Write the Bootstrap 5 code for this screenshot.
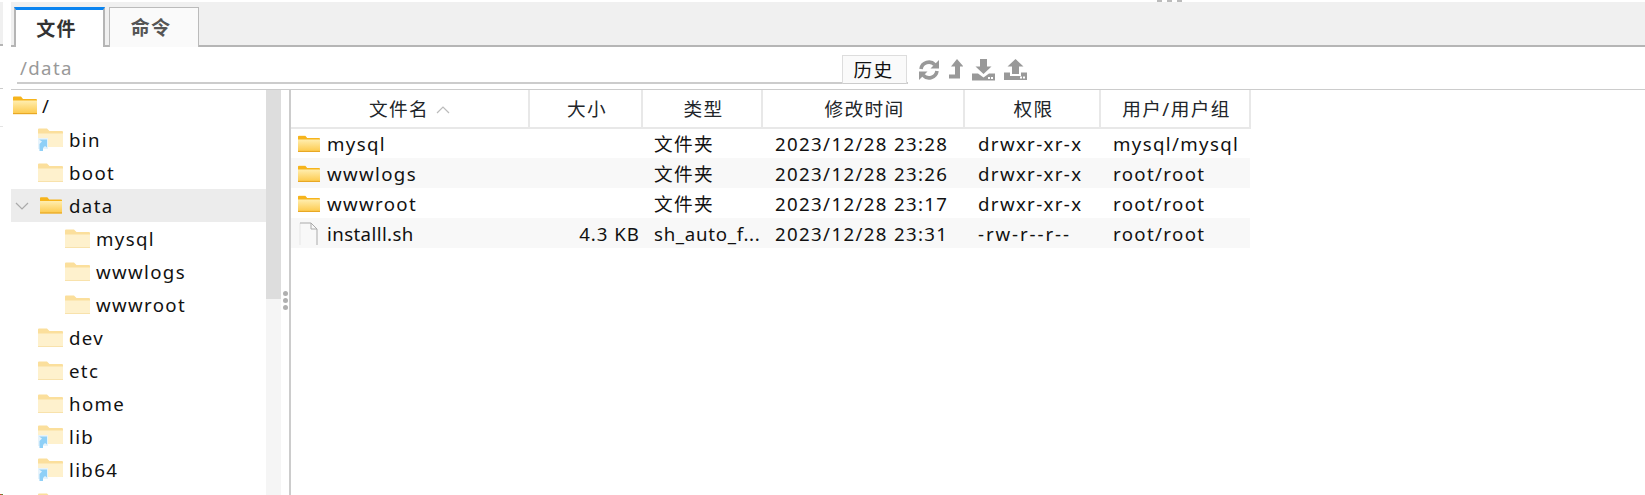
<!DOCTYPE html>
<html lang="zh-CN">
<head>
  <meta charset="UTF-8" />
  <meta name="viewport" content="width=device-width, initial-scale=1" />
  <title>文件</title>
  <link href="https://cdn.jsdelivr.net/npm/bootstrap@5.3.3/dist/css/bootstrap.min.css" rel="stylesheet" />
  <style>
    html, body { height: 495px; overflow: hidden; }
    body {
      background: #fff;
      color: #111;
      font-family: "Noto Sans", "Noto Sans CJK SC", sans-serif;
      font-size: 18.67px;
      letter-spacing: 1.35px;
      line-height: 24px;
    }
    .page-wrap { height: 495px; padding-top: 2px; position: relative; }
    .edge-strip { width: 3px; flex: none; margin-right: 8px; }
    .edge-top { height: 44px; background: #f0f0f0; border-bottom: 2px solid #b5b5b5; }
    .edge-line { height: 1px; background: #ccc; margin-top: 42px; }
    .edge-line2 { height: 1px; background: #e4e4e4; margin-top: 37px; }
    .main-col { min-width: 0; }

    .tab-bar { height: 45px; background: #f0f0f0; border-bottom: 2px solid #b5b5b5; padding: 5px 0 0 3px; gap: 4px; }
    .tab-bar .nav-link {
      width: 90px; height: 40px; padding: 0 6px 0 0; border-radius: 0; background: #fafafa;
      border: 1px solid #bbb; border-bottom: 0; color: #555; font-weight: 700; font-size: 19px;
      display: flex; align-items: center; justify-content: center;
    }
    .tab-bar .nav-link.active {
      width: 91px; height: 40px; background: #fff; color: #333;
      border-top: 3px solid #0a84f0; border-left: 2px solid #b5b5b5; border-right: 2px solid #b5b5b5;
    }

    .path-bar { height: 43px; border-bottom: 1px solid #ccc; background: #fff; padding-left: 6px; }
    .path-field {
      width: 891px; height: 37px; border-bottom: 2px solid #ccc; color: #999; padding-left: 3px; line-height: 42px;
    }
    .hist-btn {
      position: relative; width: 65px; height: 29px; margin: 8px 0 0 -66px; align-self: flex-start;
      padding: 0 2px 0 0; border: 1px solid #ddd; border-bottom: 1px solid #ccc; border-radius: 0; background: #fafafa;
      color: #111; font-size: 18.67px; line-height: 27px; letter-spacing: 1.35px;
    }
    .tool-icons { margin-left: 11px; margin-top: 12px; align-self: flex-start; gap: 9px; color: #999; }
    .tool-icons svg { display: block; }

    .split { height: 405px; }
    .tree-pane { width: 255px; flex: none; overflow: hidden; padding-top: 1px; }
    .tree-row { height: 33px; align-items: center; white-space: nowrap; }
    .tree-row.picked { background: #ececec; }
    .tree-root { padding: 0 0 3px 2px; gap: 5px; height: 32px; }
    .tree-l1 { padding-left: 27px; gap: 6px; }
    .tree-l1.open { padding-left: 29px; gap: 7px; position: relative; }
    .tree-l2 { padding-left: 54px; gap: 6px; }
    .tree-chev { position: absolute; left: 4px; top: 13px; }

    .scroll-track { width: 15px; flex: none; background: #f5f5f5; }
    .scroll-thumb { height: 209px; background: #ddd; }
    .split-grip { width: 8px; flex: none; gap: 2px; padding-top: 201px; }
    .grip-dot { width: 5px; height: 5px; border-radius: 50%; background: #b0b0b0; }

    .file-pane { border-left: 2px solid #ccc; min-width: 0; }
    .file-table { width: 959px; table-layout: fixed; margin: 0; border-collapse: collapse; }
    .file-table th, .file-table td { padding: 1px 0 0 12px; border: 0; font-weight: 400; white-space: nowrap; overflow: hidden; box-shadow: none; }
    .file-table thead th {
      height: 38px; text-align: center; padding: 1px 0 0 3px; border-right: 2px solid #e8e8e8; border-bottom: 2px solid #e8e8e8; vertical-align: middle;
    }
    .file-table thead th:first-child { padding-left: 0; }
    .file-table td { height: 30px; vertical-align: middle; background: transparent; color: #111; }
    .file-table tbody tr:nth-child(even) td { background: #f8f8f8; }
    .file-table td.name-cell { padding-left: 7px; }
    .file-table td.size-cell { padding: 1px 2px 0 0; text-align: right; letter-spacing: 1px; }
    .file-table td.date-cell { padding-left: 13px; }
    .file-table td.perm-cell { padding-left: 14px; }
    .file-table td.owner-cell { padding-left: 13px; }
    .name-inner { gap: 7px; }
    .tight-name { letter-spacing: .4px; }
    .tight-type { letter-spacing: .7px; }
    .wide-perm { letter-spacing: 1.9px; }
    .sort-caret { margin-left: 7px; vertical-align: 2px; }

    .top-dots { position: absolute; left: 1157px; top: 0; gap: 5px; }
    .top-dots span { width: 5px; height: 2px; background: #bbb; }
    .corner-px { position: absolute; left: 0; bottom: 0; width: 3px; height: 1px; background: linear-gradient(90deg, #e33, #3a3); }
  </style>
</head>
<body>
  <svg width="0" height="0" class="position-absolute">
    <defs>
      <linearGradient id="folderFill" x1="0" y1="0" x2="0" y2="1">
        <stop offset="0" stop-color="#ffeeb0" />
        <stop offset="1" stop-color="#fdc94a" />
      </linearGradient>
      <symbol id="folderBright" viewBox="0 0 24 19">
        <path d="M0 1.500a1 1 0 0 1 1-1h7l2 2.500H23a1 1 0 0 1 1 1V17a1 1 0 0 1-1 1H1a1 1 0 0 1-1-1z" fill="#f6b41c" />
        <path d="M0 4.500h24V17a1 1 0 0 1-1 1H1a1 1 0 0 1-1-1z" fill="url(#folderFill)" />
        <rect x="0" y="17" width="24" height="1.200" fill="#e8a825" />
      </symbol>
      <symbol id="folderPale" viewBox="0 0 25 20">
        <path d="M0 1.500a1 1 0 0 1 1-1h8l2.500 2.500H24a1 1 0 0 1 1 1V18a1 1 0 0 1-1 1H1a1 1 0 0 1-1-1z" fill="#fbdf9c" />
        <path d="M0 5.500h25V18a1 1 0 0 1-1 1H1a1 1 0 0 1-1-1z" fill="#fef1cd" />
        <rect x="0" y="18" width="25" height="1" fill="#f8e2ac" />
      </symbol>
      <symbol id="folderLink" viewBox="0 0 25 24">
        <path d="M0 1.500a1 1 0 0 1 1-1h8l2.500 2.500H24a1 1 0 0 1 1 1V18a1 1 0 0 1-1 1H1a1 1 0 0 1-1-1z" fill="#fbdf9c" />
        <path d="M0 5.500h25V18a1 1 0 0 1-1 1H1a1 1 0 0 1-1-1z" fill="#fef1cd" />
        <rect x="0" y="10" width="10" height="11" fill="#e6f3fb" />
        <path d="M1 11.500h8v8l-2-1.500-2 2v3H1.500v-7l2.500-2.500z" fill="#8fd0f7" />
      </symbol>
    </defs>
  </svg>

  <div class="page-wrap d-flex">
    <div class="edge-strip">
      <div class="edge-top"></div>
      <div class="edge-line"></div>
      <div class="edge-line2"></div>
    </div>

    <div class="main-col flex-grow-1 d-flex flex-column">
      <ul class="nav tab-bar">
        <li class="nav-item"><a class="nav-link active" href="#">文件</a></li>
        <li class="nav-item"><a class="nav-link" href="#">命令</a></li>
      </ul>

      <div class="path-bar d-flex">
        <div class="path-field">/data</div>
        <button class="btn hist-btn" type="button">历史</button>
        <div class="tool-icons d-flex">
          <svg width="22" height="22" viewBox="0 0 22 22" fill="none">
            <path d="M3 10A8 8 0 0 1 16.800 5.800" stroke="#999" stroke-width="3.600" />
            <path d="M21 1v8.500h-8.500z" fill="#999" />
            <path d="M19 12A8 8 0 0 1 5.200 16.200" stroke="#999" stroke-width="3.600" />
            <path d="M1 21v-8.500h8.500z" fill="#999" />
          </svg>
          <svg width="14" height="20" viewBox="0 0 14 20">
            <path d="M8 0l6.500 7.500H11V19.500H0v-4h6V7.500H2z" fill="#999" />
          </svg>
          <svg width="23" height="22" viewBox="0 0 23 22">
            <path d="M8 0h7v7.500h4.500L11.500 15 3.500 7.500H8z" fill="#999" />
            <path d="M0 14.500h6l5.500 4 5.500-4h6V21.500H0z" fill="#999" />
            <rect x="16" y="18" width="2" height="2" fill="#fff" />
            <rect x="19" y="18" width="2" height="2" fill="#fff" />
          </svg>
          <svg width="23" height="22" viewBox="0 0 23 22">
            <path d="M11.500 0l8 7.500H15V15H8V7.500H3.500z" fill="#999" />
            <path d="M0 13.500h6v3.500h11v-3.500h6V21H0z" fill="#999" />
            <rect x="16" y="17.500" width="2" height="2" fill="#fff" />
            <rect x="19" y="17.500" width="2" height="2" fill="#fff" />
          </svg>
        </div>
      </div>

      <div class="split d-flex">
        <div class="tree-pane">
          <div class="tree-row tree-root d-flex"><svg width="24" height="19"><use href="#folderBright" /></svg><span>/</span></div>
          <div class="tree-row tree-l1 d-flex"><svg width="25" height="24"><use href="#folderLink" /></svg><span>bin</span></div>
          <div class="tree-row tree-l1 d-flex"><svg width="25" height="20"><use href="#folderPale" /></svg><span>boot</span></div>
          <div class="tree-row tree-l1 open picked d-flex">
            <svg class="tree-chev" width="14" height="8" viewBox="0 0 14 8" fill="none"><path d="M1 1l6 6 6-6" stroke="#aaa" stroke-width="1.200" /></svg>
            <svg width="22" height="19" viewBox="0 0 24 19"><use href="#folderBright" /></svg><span>data</span>
          </div>
          <div class="tree-row tree-l2 d-flex"><svg width="25" height="20"><use href="#folderPale" /></svg><span>mysql</span></div>
          <div class="tree-row tree-l2 d-flex"><svg width="25" height="20"><use href="#folderPale" /></svg><span>wwwlogs</span></div>
          <div class="tree-row tree-l2 d-flex"><svg width="25" height="20"><use href="#folderPale" /></svg><span>wwwroot</span></div>
          <div class="tree-row tree-l1 d-flex"><svg width="25" height="20"><use href="#folderPale" /></svg><span>dev</span></div>
          <div class="tree-row tree-l1 d-flex"><svg width="25" height="20"><use href="#folderPale" /></svg><span>etc</span></div>
          <div class="tree-row tree-l1 d-flex"><svg width="25" height="20"><use href="#folderPale" /></svg><span>home</span></div>
          <div class="tree-row tree-l1 d-flex"><svg width="25" height="24"><use href="#folderLink" /></svg><span>lib</span></div>
          <div class="tree-row tree-l1 d-flex"><svg width="25" height="24"><use href="#folderLink" /></svg><span>lib64</span></div>
          <div class="tree-row tree-l1 d-flex"><svg width="25" height="20"><use href="#folderPale" /></svg></div>
        </div>

        <div class="scroll-track"><div class="scroll-thumb"></div></div>
        <div class="split-grip d-flex flex-column align-items-center">
          <div class="grip-dot"></div><div class="grip-dot"></div><div class="grip-dot"></div>
        </div>

        <div class="file-pane flex-grow-1">
          <table class="table file-table">
            <colgroup>
              <col style="width:238px" /><col style="width:113px" /><col style="width:120px" />
              <col style="width:202px" /><col style="width:136px" /><col style="width:150px" />
            </colgroup>
            <thead>
              <tr>
                <th>文件名<svg class="sort-caret" width="14" height="8" viewBox="0 0 14 8" fill="none"><path d="M1 7l6-6 6 6" stroke="#bbb" stroke-width="1.200" /></svg></th>
                <th>大小</th><th>类型</th><th>修改时间</th><th>权限</th><th>用户/用户组</th>
              </tr>
            </thead>
            <tbody>
              <tr>
                <td class="name-cell"><div class="name-inner d-flex align-items-center"><svg width="22" height="18" viewBox="0 0 24 19"><use href="#folderBright" /></svg>mysql</div></td>
                <td class="size-cell"></td><td>文件夹</td><td class="date-cell">2023/12/28 23:28</td><td class="perm-cell">drwxr-xr-x</td><td class="owner-cell">mysql/mysql</td>
              </tr>
              <tr>
                <td class="name-cell"><div class="name-inner d-flex align-items-center"><svg width="22" height="18" viewBox="0 0 24 19"><use href="#folderBright" /></svg>wwwlogs</div></td>
                <td class="size-cell"></td><td>文件夹</td><td class="date-cell">2023/12/28 23:26</td><td class="perm-cell">drwxr-xr-x</td><td class="owner-cell">root/root</td>
              </tr>
              <tr>
                <td class="name-cell"><div class="name-inner d-flex align-items-center"><svg width="22" height="18" viewBox="0 0 24 19"><use href="#folderBright" /></svg>wwwroot</div></td>
                <td class="size-cell"></td><td>文件夹</td><td class="date-cell">2023/12/28 23:17</td><td class="perm-cell">drwxr-xr-x</td><td class="owner-cell">root/root</td>
              </tr>
              <tr>
                <td class="name-cell"><div class="name-inner d-flex align-items-center"><svg width="22" height="24" viewBox="0 0 22 24" fill="none"><path d="M2 1v22" stroke="#e6e6e6" stroke-width="1" /><path d="M2 1h11l6 6v16" stroke="#aaa" stroke-width="1" /><path d="M13 1v6h6" stroke="#aaa" stroke-width="1" /></svg><span class="tight-name">installl.sh</span></div></td>
                <td class="size-cell">4.3 KB</td><td class="tight-type">sh_auto_f...</td><td class="date-cell">2023/12/28 23:31</td><td class="perm-cell wide-perm">-rw-r--r--</td><td class="owner-cell">root/root</td>
              </tr>
            </tbody>
          </table>
        </div>
      </div>
    </div>

    <div class="top-dots d-flex"><span></span><span></span><span></span></div>
    <div class="corner-px"></div>
  </div>
</body>
</html>
